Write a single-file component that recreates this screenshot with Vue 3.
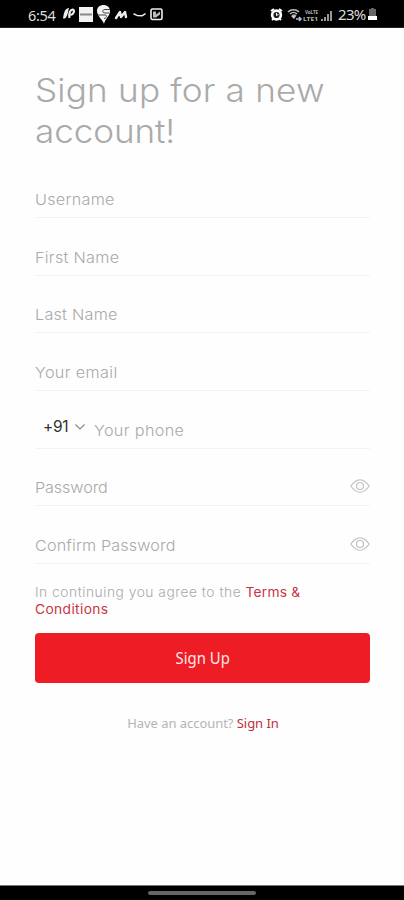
<script setup>
const fields = [
  { label: 'Username', spacing: 0.25 },
  { label: 'First Name', spacing: 0.25 },
  { label: 'Last Name', spacing: 0.22 },
  { label: 'Your email', spacing: 0.32 },
  { label: 'Your phone', spacing: 0.32, phone: true },
  { label: 'Password', spacing: -0.1, eye: true },
  { label: 'Confirm Password', spacing: 0.12, eye: true },
]
</script>

<template>
  <div class="screen">
    <header class="status">
      <span class="time">6:54</span>
      <svg class="apps" width="104" height="25" viewBox="0 0 104 25">
        <path d="M1 18.500C2 12 3 8.500 7 8c-1 3-1 8-4 10.500z" fill="#eee" />
        <path d="M7.500 18c-1-5 1-8.500 3.200-8.500 2.300.5 1.300 5-2.200 5.500" fill="none" stroke="#eee" stroke-width="2.200" />
        <g fill="none" stroke="#eee" stroke-linecap="round" stroke-linejoin="round">
          <path d="M54 18l4-6 1 5 4-5 1 5" stroke-width="2.400" />
          <path d="M72 14l3 1.400 5 .4 3-2" stroke-width="1.500" />
        </g>
        <path d="M17 7h14v15H17z" fill="#f2f2f2" />
        <path d="M18 14.500h12" stroke="#888" stroke-width="2" />
        <path d="M42 24c-1-4-7-8-7-13 0-8 13-8 13 0 0 5-5 8-6 13z" fill="#f2f2f2" />
        <path d="M48 9.500h-5c-3 0-3 3.500 0 3.500h4M36 15h7c2.500 0 2 3-1 3.500" stroke="#444" stroke-width="1" fill="none" />
        <rect x="89" y="9" width="11" height="10.500" rx="1.500" fill="none" stroke="#eee" stroke-width="1.600" />
        <path d="M91 17.500v-6h3v3l4-3v3l-4 3z" fill="#bbb" />
      </svg>
      <svg class="system" width="68" height="22" viewBox="0 0 68 22">
        <path d="M2 9l3-2M10 7l3 2M3 18l2-2M12 18l-2-2" stroke="#fff" stroke-width="2" />
        <circle cx="7.500" cy="13" r="4.400" fill="#222" stroke="#fff" stroke-width="2.600" />
        <path d="M7.500 11v2.500l2-1" stroke="#fff" fill="none" />
        <g fill="none" stroke="#bbb" stroke-width="1.600">
          <path d="M19 10c3-3 8-3 11 0M21 12c2-2 5-2 7 0M23 14q2-2 4 0" />
          <path d="M27 17h5m-2-2l2 2-2 2" />
        </g>
        <path d="M22 14h5l-2 3z" fill="#ccc" />
        <text x="36" y="12" class="lte" textLength="13" lengthAdjust="spacingAndGlyphs">VoLTE</text>
        <text x="34" y="19" class="lte" textLength="15" lengthAdjust="spacingAndGlyphs">LTE1</text>
        <path d="M53 17v2M56 15v4M59 12v7M62 9v10" stroke="#aaa" stroke-width="1.800" />
      </svg>
      <span class="percent">23%</span>
      <svg class="battery" width="9" height="15" viewBox="0 0 9 15">
        <path d="M3 1h3v1h2v7H1V2h2z" fill="#666" />
        <path d="M0 9h9v4H0z" fill="#fff" />
      </svg>
    </header>

    <main class="content">
      <h1><span class="line-one">Sign up for a new</span><br /><span class="line-two">account!</span></h1>
      <form class="fields" @submit.prevent>
        <div v-for="field in fields" :key="field.label" class="field">
          <div v-if="field.phone" class="code">
            <span>+91</span>
            <svg width="12" height="8" viewBox="0 0 12 8"><path d="M1.500 1.500L6 6l4.500-4.500" fill="none" stroke="#888" stroke-width="1.100" /></svg>
          </div>
          <span class="label" :style="{ letterSpacing: field.spacing + 'px' }">{{ field.label }}</span>
          <svg v-if="field.eye" class="eye" width="20" height="16" viewBox="0 0 20 16">
            <path d="M.8 8Q10-4.500 19.200 8 10 20.500.8 8z" />
            <circle cx="10" cy="8" r="3.500" />
          </svg>
        </div>
      </form>
      <p class="terms">In continuing you agree to the <a>Terms &amp;<br /><span class="wide">Conditions</span></a></p>
      <button class="submit"><span>Sign Up</span></button>
      <p class="signin">Have an account? <a>Sign In</a></p>
    </main>
    <footer class="nav"><i></i></footer>
  </div>
</template>

<style>
body { margin: 0; background: #fff; }
</style>

<style scoped>
.screen { width: 404px; height: 900px; display: flex; flex-direction: column; background: #fefefe; font-family: Inter, "Open Sans", sans-serif; overflow: hidden; }
.status { height: 28px; flex: none; box-sizing: border-box; background: #000; border-bottom: 1px solid #222; color: #ddd; display: flex; align-items: flex-start; padding: 0 27px 0 28px; font-family: "Noto Sans", sans-serif; }
.time { width: 34px; font-size: 14.500px; line-height: 30px; letter-spacing: -.3px; }
.apps { flex: none; }
.system { margin: 2px 1px 0 auto; flex: none; }
.lte { font: 700 6px "Noto Sans", sans-serif; fill: #bbb; }
.percent { width: 30px; font-size: 15px; line-height: 29px; letter-spacing: -.7px; }
.battery { margin-top: 7px; flex: none; }
.content { flex: 1; padding: 42px 34px 0 35px; }
h1 { margin: 0; height: 100px; font-size: 32.500px; line-height: 41px; font-weight: 300; color: #aaa; white-space: nowrap; }
h1 span { display: inline-block; transform: scaleX(1.08); transform-origin: left; }
.line-one { letter-spacing: .18px; }
.line-two { letter-spacing: -.1px; }
.fields { display: flex; flex-direction: column; }
.field { height: 57.700px; box-sizing: border-box; display: flex; align-items: flex-end; border-bottom: 1px solid #f3f3f3; padding-bottom: 6px; }
.field:first-child { height: 48px; }
.label { font-size: 15px; line-height: 22px; font-weight: 300; color: #aaa; white-space: nowrap; transform: scaleX(1.08); transform-origin: left; }
.code { display: flex; align-items: center; gap: 6px; width: 51px; height: 30px; padding-left: 8px; font-size: 15.500px; color: #333; letter-spacing: -.3px; }
.eye { margin: 0 0 5px auto; fill: none; stroke: #bebebe; stroke-width: 1.100; }
.terms { margin: 20px 0 0; font-size: 13px; line-height: 17px; font-weight: 300; color: #aaa; letter-spacing: .48px; white-space: nowrap; transform: scaleX(1.06); transform-origin: left; }
.terms a { color: #c9343f; font-weight: 400; letter-spacing: .2px; }
.wide { letter-spacing: .35px; }
.submit { display: block; width: 335px; height: 50px; margin-top: 15px; padding: 0 0 1px; border: 0; border-radius: 4px; background: #ee1c25; color: #ffe9e9; font: 400 16px "Noto Sans", sans-serif; }
.submit span { display: inline-block; transform: translateX(.5px) scaleX(.93); }
.signin { margin: 30px 0 0; padding-left: 1px; text-align: center; font: 400 13px/20px "Noto Sans", sans-serif; letter-spacing: -.05px; color: #b5b5b5; white-space: nowrap; }
.signin a { color: #bd303b; }
.nav { height: 15px; flex: none; background: #000; box-sizing: border-box; display: flex; justify-content: center; padding-top: 5px; border-top: 1px solid #777; }
.nav i { width: 108px; height: 4px; border-radius: 2px; background: #666; }
</style>
